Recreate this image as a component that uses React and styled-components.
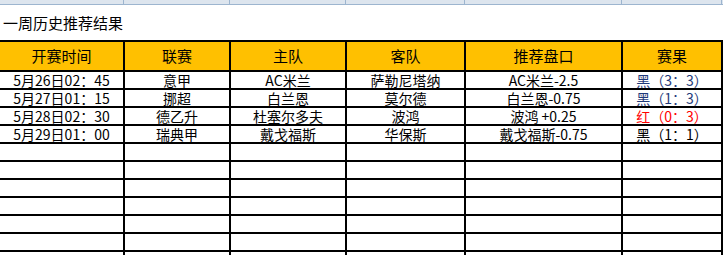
import React from 'react';
import styled, { createGlobalStyle } from 'styled-components';

const GlobalStyle = createGlobalStyle`
    body {
        margin: 0;
        background: #fff;
        font-family: "Noto Sans CJK SC", "Liberation Sans", sans-serif;
        color: #000;
    }
`;

const Sheet = styled.div`
    width: 723px;
    height: 255px;
    overflow: hidden;
    background: #fff;
`;

const ColumnStrip = styled.div`
    display: grid;
    grid-template-columns: 124px 106px 116px 119px 157px 100px 1fr;
    height: 4px;
    background: #dde5ee;
    border-bottom: 1px solid #9db5cf;

    span {
        border-right: 1px solid #9db5cf;
    }
`;

const Title = styled.div`
    height: 35px;
    padding-left: 3px;
    display: flex;
    align-items: center;
    font-size: 15px;
    line-height: 18px;
`;

const Table = styled.table`
    border-collapse: collapse;
    table-layout: fixed;
    width: 723px;
    font-size: 14px;
    line-height: 15px;

    th, td {
        border: 2px solid #000;
        padding: 0;
        text-align: center;
        white-space: nowrap;
        overflow: hidden;
    }

    th:first-child, td:first-child {
        border-left: none;
    }
`;

const HeadRow = styled.tr`
    height: 30px;
    background: #ffc000;

    th {
        font-weight: normal;
        font-size: 15px;
        line-height: 18px;
    }
`;

const Row = styled.tr`
    height: 18px;
`;

const Result = styled.td`
    color: ${p => p.$tone === 'red' ? '#ff0000' : p.$tone === 'blue' ? '#1f3a7a' : '#000'};
`;

const cols = [124, 106, 116, 119, 157, 100];
const heads = ['开赛时间', '联赛', '主队', '客队', '推荐盘口', '赛果'];

const rows = [
    ['5月26日02：45', '意甲', 'AC米兰', '萨勒尼塔纳', 'AC米兰-2.5', '黑（3：3）', 'blue'],
    ['5月27日01：15', '挪超', '白兰恩', '莫尔德', '白兰恩-0.75', '黑（1：3）', 'blue'],
    ['5月28日02：30', '德乙升', '杜塞尔多夫', '波鸿', '波鸿 +0.25', '红（0：3）', 'red'],
    ['5月29日01：00', '瑞典甲', '戴戈福斯', '华保斯', '戴戈福斯-0.75', '黑（1：1）', 'black'],
];

function App() {
    return (
        <Sheet>
            <GlobalStyle />
            <ColumnStrip>
                {cols.map((w, i) => <span key={i} />)}
                <i />
            </ColumnStrip>
            <Title>一周历史推荐结果</Title>
            <Table>
                <colgroup>
                    {cols.map((w, i) => <col key={i} style={{ width: w }} />)}
                </colgroup>
                <thead>
                    <HeadRow>
                        {heads.map(h => <th key={h}>{h}</th>)}
                    </HeadRow>
                </thead>
                <tbody>
                    {rows.map(r => (
                        <Row key={r[0]}>
                            {r.slice(0, 5).map((c, i) => <td key={i}>{c}</td>)}
                            <Result $tone={r[6]}>{r[5]}</Result>
                        </Row>
                    ))}
                    {[0, 1, 2, 3, 4, 5, 6].map(n => (
                        <Row key={'e' + n}>
                            {cols.map((w, i) => <td key={i} />)}
                        </Row>
                    ))}
                </tbody>
            </Table>
        </Sheet>
    );
}

export default App;
